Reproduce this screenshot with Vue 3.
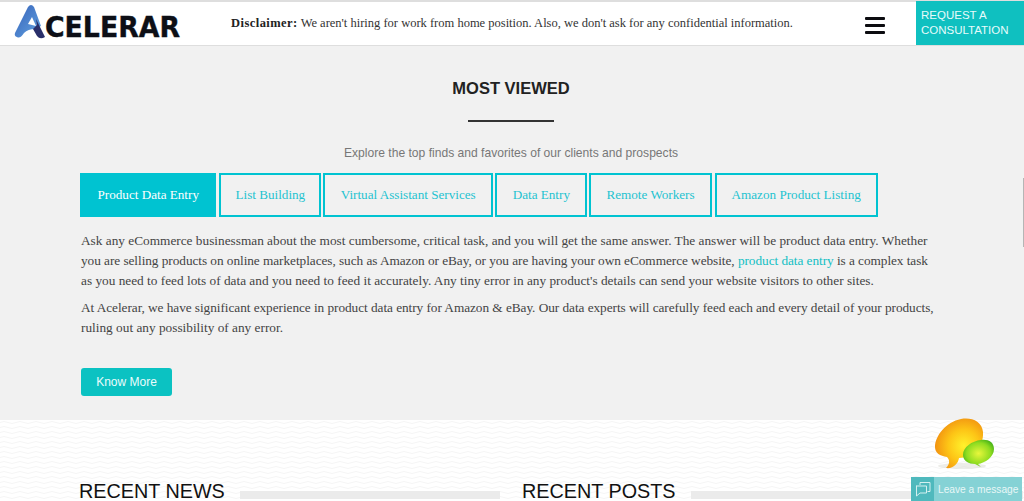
<template>
  <div class="page">
    <header class="topbar">
      <a class="logo" aria-label="Acelerar">
        <svg width="231" height="42" viewBox="0 0 231 42">
          <defs>
            <linearGradient id="logoBlue" x1="0" y1="0" x2="1" y2="1">
              <stop offset="0" stop-color="#3561b8" />
              <stop offset="1" stop-color="#63a4e2" />
            </linearGradient>
          </defs>
          <path d="M15 31 L28 5 Q31 1 34 5 L41 24 L35 27 Q28 27 24 31 Q20 37 17 35 Q14 34 15 31 Z" fill="url(#logoBlue)" />
          <path d="M28 22 L32 15 L36 24 Z" fill="#fff" />
          <path d="M33 27 L37 23 L36 17 L45 35 Q40 38 37 34 Z" fill="#2a2f6a" />
          <text x="45" y="35" class="logo-text" textLength="135" lengthAdjust="spacingAndGlyphs">CELERAR</text>
        </svg>
      </a>
      <p class="disclaimer"><strong>Disclaimer:</strong> We aren't hiring for work from home position. Also, we don't ask for any confidential information.</p>
      <div class="burger"><span></span><span></span><span></span></div>
      <a class="cta">REQUEST A<br />CONSULTATION</a>
    </header>

    <section class="viewed">
      <h2>MOST VIEWED</h2>
      <div class="rule"></div>
      <p class="sub">Explore the top finds and favorites of our clients and prospects</p>
      <nav class="tabs">
        <a v-for="(t, i) in tabs" :key="t" class="tab" :class="{ active: i === 0 }">{{ t }}</a>
      </nav>
      <div class="copy">
        <p>Ask any eCommerce businessman about the most cumbersome, critical task, and you will get the same answer. The answer will be product data entry. Whether<br /><span class="tight">you are selling products on online marketplaces, such as Amazon or eBay, or you are having your own eCommerce website, <a>product data entry</a> is a complex task</span><br />as you need to feed lots of data and you need to feed it accurately. Any tiny error in any product's details can send your website visitors to other sites.</p>
        <p><span class="tight">At Acelerar, we have significant experience in product data entry for Amazon &amp; eBay. Our data experts will carefully feed each and every detail of your products,</span><br />ruling out any possibility of any error.</p>
      </div>
      <a class="more">Know More</a>
    </section>

    <section class="recent">
      <div class="recent-col news">
        <h3>RECENT NEWS</h3>
        <div class="bar"></div>
      </div>
      <div class="recent-col posts">
        <h3>RECENT POSTS</h3>
        <div class="bar"></div>
      </div>
    </section>

    <div class="scroll-thumb"></div>

    <aside class="chat">
      <svg class="bubbles" width="64" height="56" viewBox="0 0 64 56">
        <defs>
          <radialGradient id="orange" cx="0.6" cy="0.55" r="0.65">
            <stop offset="0" stop-color="#fff22c" />
            <stop offset="0.5" stop-color="#fdc516" />
            <stop offset="1" stop-color="#f08a10" />
          </radialGradient>
          <radialGradient id="green" cx="0.5" cy="0.5" r="0.6">
            <stop offset="0" stop-color="#e8f63c" />
            <stop offset="0.65" stop-color="#8fdc20" />
            <stop offset="1" stop-color="#3cab18" />
          </radialGradient>
        </defs>
        <ellipse cx="30" cy="49" rx="24" ry="3" fill="#dcdcd4" opacity="0.5" />
        <path d="M15 40 C18 43 18 47 14 51 C21 52 26 47 27 41 C40 41 52 30 51 15 C50 4 39 0 29 2 C14 5 3 19 3 30 C3 36 8 39 15 40 Z" fill="url(#orange)" />
        <path d="M46 47 C53 46 62 40 62 32 C62 25 56 22 49 23 C40 24 31 30 31 38 C31 44 37 47 43 47 L49 50 Z" fill="url(#green)" />
      </svg>
      <div class="chat-bar">
        <span class="chat-icon">
          <svg width="16" height="16" viewBox="0 0 16 16" fill="none" stroke="#d4f0f0" stroke-width="1">
            <path d="M5 4 V1.5 H15 V10.5 H12.5" />
            <path d="M1 5 H11.5 V12 H5 L1.5 15 V5 Z" />
          </svg>
        </span>
        <span class="chat-text">Leave a message</span>
      </div>
    </aside>
  </div>
</template>

<script setup>
const tabs = [
  'Product Data Entry',
  'List Building',
  'Virtual Assistant Services',
  'Data Entry',
  'Remote Workers',
  'Amazon Product Listing'
]
</script>

<style>
html, body { margin: 0; overflow: hidden; }
</style>

<style scoped>
.page {
  position: relative;
  width: 1024px;
  height: 501px;
  overflow: hidden;
  background: #f1f1f1;
  font-family: "Liberation Sans", Arial, sans-serif;
}
.topbar {
  display: flex;
  align-items: flex-start;
  height: 43px;
  background: #fff;
  border-top: 2px solid #dedede;
  border-bottom: 1px solid #dedede;
}
.logo { display: block; width: 231px; height: 42px; flex: none; overflow: hidden; }
.logo svg { display: block; }
.logo-text {
  font-family: "DejaVu Sans", sans-serif;
  font-weight: 700;
  font-size: 29px;
  fill: #0d0f16;
  stroke: #0d0f16;
  stroke-width: 0.4px;
}
.disclaimer {
  margin: 13px 0 0;
  width: 634px;
  flex: none;
  font-family: "Liberation Serif", serif;
  font-size: 12.5px;
  line-height: 16px;
  color: #333;
  white-space: nowrap;
}
.disclaimer strong { color: #222; letter-spacing: 0.45px; }
.burger {
  width: 51px;
  flex: none;
  display: flex;
  flex-direction: column;
  gap: 4px;
  padding-top: 15px;
  box-sizing: border-box;
  align-items: flex-start;
}
.burger span { width: 20px; height: 3px; background: #0c0c10; display: block; border-radius: 1px; }
.cta {
  width: 108px;
  height: 44px;
  margin-top: -1px;
  padding: 7px 0 0 5px;
  box-sizing: border-box;
  background: #0fc0c0;
  color: #e6fbfb;
  font-size: 11.5px;
  line-height: 15px;
  flex: none;
}
.viewed { height: 374px; padding: 0 80px; box-sizing: border-box; }
.viewed h2 {
  margin: 0;
  padding-top: 32px;
  text-align: center;
  font-size: 16.5px;
  line-height: 20px;
  font-weight: 700;
  color: #222;
  transform: translateX(-1px);
}
.rule { width: 86px; height: 2px; background: #333; margin: 22px auto 0 auto; transform: translateX(-1px); }
.sub {
  margin: 23px 0 0;
  text-align: center;
  font-size: 12.1px;
  line-height: 16px;
  color: #777;
  transform: translateX(-1px);
}
.tabs { display: flex; gap: 2px; margin-top: 12px; }
.tab {
  height: 44px;
  box-sizing: border-box;
  padding: 0 15px;
  border: 2px solid #00c3d1;
  font-family: "Liberation Serif", serif;
  font-size: 13.15px;
  line-height: 40px;
  color: #1ec3d0;
  white-space: nowrap;
}
.tab:nth-child(1), .tab:nth-child(3), .tab:nth-child(4) { padding: 0 15.5px; }
.tab:nth-child(2) { padding: 0 14px; }
.tab:nth-child(6) { margin-left: 1px; }
.tab.active { background: #00c3d1; color: #fff; margin-right: 1px; }
.copy {
  margin: 14px 0 0 1px;
  font-family: "Liberation Serif", serif;
  font-size: 13.3px;
  line-height: 20px;
  color: #444;
  white-space: nowrap;
}
.copy p { margin: 0 0 6.5px; }
.copy a { color: #12bfc4; }
.tight { letter-spacing: -0.055px; }
.more {
  display: block;
  width: 91px;
  height: 28px;
  margin: 30px 0 0 1px;
  background: #0bc2c2;
  border-radius: 3px;
  color: #eafcfc;
  text-align: center;
  font-size: 12px;
  line-height: 28px;
}
.recent {
  height: 81px;
  display: flex;
  background-color: #fff;
  background-image: url("data:image/svg+xml,%3Csvg xmlns='http://www.w3.org/2000/svg' width='16' height='5'%3E%3Cpath d='M0 2.5 Q4 0.5 8 2.5 T16 2.5' fill='none' stroke='%23f5f5f5' stroke-width='1'/%3E%3C/svg%3E");
  position: relative;
}
.recent-col { position: relative; height: 81px; flex: none; display: flex; align-items: flex-start; box-sizing: border-box; }
.news { width: 522px; padding-left: 79px; }
.posts { width: 502px; }
.recent h3 {
  margin: 59px 0 0;
  font-size: 19.8px;
  line-height: 24px;
  font-weight: 400;
  color: #111;
  white-space: nowrap;
}
.bar { height: 8px; background: #ebebeb; margin-top: 71px; flex: none; }
.news .bar { width: 260px; margin-left: 15px; }
.posts .bar { width: 332px; margin-left: 15px; }
.scroll-thumb {
  position: absolute;
  right: 0;
  top: 178px;
  width: 1px;
  height: 69px;
  background: #b5b5b5;
}
.chat { position: absolute; left: 911px; top: 417px; width: 113px; height: 84px; }
.bubbles { position: absolute; left: 21px; top: 0; }
.chat-bar {
  position: absolute;
  left: 0;
  bottom: 0;
  width: 111px;
  height: 24px;
  background: #85d2d5;
  display: flex;
  align-items: center;
}
.chat-icon {
  width: 23px;
  height: 24px;
  background: #4fb9bd;
  display: flex;
  align-items: center;
  justify-content: center;
  flex: none;
}
.chat-text { margin-left: 4px; font-size: 10.2px; color: #e8f7f7; white-space: nowrap; }
</style>
